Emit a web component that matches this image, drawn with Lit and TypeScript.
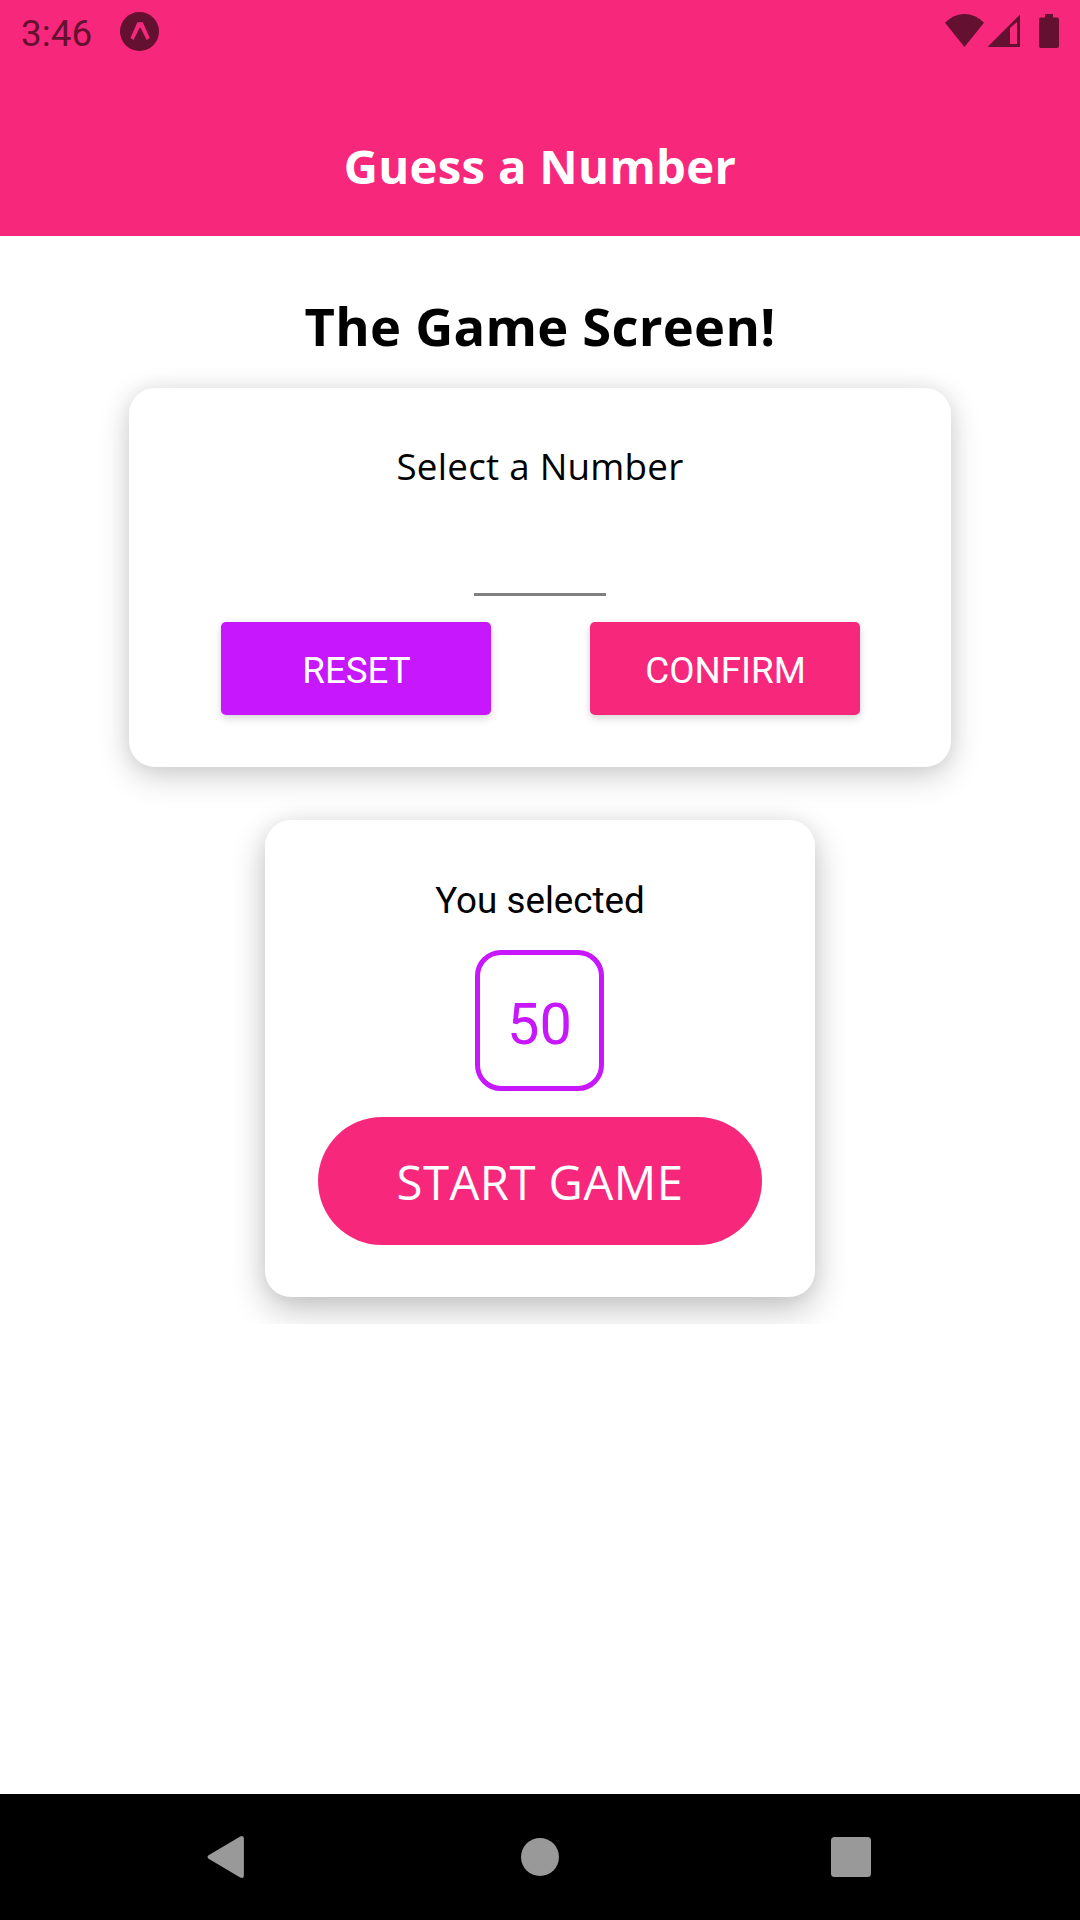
import { LitElement, html, css } from "lit";
import { customElement, property, state } from "lit/decorators.js";

@customElement("status-bar")
class StatusBar extends LitElement {
  static styles = css`
    :host {
      display: flex;
      align-items: flex-start;
      justify-content: space-between;
      height: 63px;
      box-sizing: border-box;
      padding: 0 21px;
      color: #631031;
      font-family: Roboto, sans-serif;
    }
    .side {
      display: flex;
      align-items: flex-start;
    }
    .time {
      font-size: 36.75px;
      line-height: 68px;
      letter-spacing: 0.1px;
      width: 99px;
    }
    .app {
      margin-top: 12px;
    }
    .wifi {
      margin-top: 14px;
    }
    .signal {
      margin: 14px 0 0 3px;
    }
    .battery {
      margin: 14px 0 0 19px;
    }
    svg {
      display: block;
    }
  `;
  @property() time = "";
  render() {
    return html`
      <div class="side">
        <span class="time">${this.time}</span>
        <svg class="app" width="39" height="39" viewBox="0 0 39 39">
          <circle cx="19.5" cy="19.5" r="19.5" fill="currentColor" />
          <path
            d="M17.4 10.2H22.8L29.8 26 26.6 28 20.7 16Q20.1 15 19.5 16L13.6 28 10.4 26Z"
            fill="#f7287b"
          />
        </svg>
      </div>
      <div class="side">
        <svg class="wifi" width="39" height="33" viewBox="0 0 39 33">
          <path d="M0 8.8Q8.7 0 19.5 0T39 8.8L19.5 33Z" fill="currentColor" />
        </svg>
        <svg class="signal" width="33" height="33" viewBox="0 0 33 33">
          <path
            d="M.5 33 33 .5V33ZM23 14V30H30V8Z"
            fill="currentColor"
            fill-rule="evenodd"
          />
        </svg>
        <svg class="battery" width="20" height="34" viewBox="0 0 20 34">
          <path
            d="M6 0H14V3.4H18Q20 3.4 20 5.4V32Q20 34 18 34H2Q0 34 0 32V5.4Q0 3.4 2 3.4H6Z"
            fill="currentColor"
          />
        </svg>
      </div>
    `;
  }
}

@customElement("nav-bar")
class NavBar extends LitElement {
  static styles = css`
    :host {
      display: grid;
      grid-template-columns: 450px 180px 450px;
      align-items: center;
      justify-items: center;
      height: 126px;
      background: #000;
      color: #999;
    }
    svg {
      display: block;
    }
    .back {
      margin-left: 1px;
    }
    .recent {
      margin-left: -8px;
    }
  `;
  render() {
    return html`
      <svg class="back" width="38" height="44" viewBox="0 0 38 44">
        <path
          d="M1.6 20.3 33.2 1.4Q36.9 0 36.9 3.5V40.5Q36.9 44 33.2 42.6L1.6 23.7Q-.6 22 1.6 20.3Z"
          fill="currentColor"
        />
      </svg>
      <svg width="40" height="40" viewBox="0 0 40 40">
        <circle cx="20" cy="20" r="19" fill="currentColor" />
      </svg>
      <svg class="recent" width="40" height="40" viewBox="0 0 40 40">
        <rect width="40" height="40" rx="3.5" fill="currentColor" />
      </svg>
    `;
  }
}

@customElement("app-root")
class AppRoot extends LitElement {
  static styles = css`
    :host {
      display: flex;
      flex-direction: column;
      width: 1080px;
      height: 1920px;
      background: #fff;
      color: #000;
      font-family: "Open Sans", sans-serif;
    }
    header {
      height: 236px;
      background: #f7287b;
      color: #fff;
    }
    .app-title {
      margin: 0;
      padding-top: 32px;
      font-size: 47.25px;
      line-height: 141px;
      font-weight: 700;
      letter-spacing: 0.3px;
      text-align: center;
    }
    main {
      flex: 1;
      display: flex;
      flex-direction: column;
      align-items: center;
      padding-top: 53px;
    }
    .heading {
      margin: 0 0 26px;
      font-size: 52.5px;
      line-height: 73px;
      font-weight: 700;
      letter-spacing: 0.25px;
    }
    .card {
      box-sizing: border-box;
      display: flex;
      flex-direction: column;
      align-items: center;
      background: #fff;
      border-radius: 26px;
      padding: 52px;
      box-shadow: 0 10px 32px rgba(0, 0, 0, 0.18), 0 0 20px rgba(0, 0, 0, 0.07);
    }
    .entry {
      width: 822px;
      height: 379px;
    }
    .label {
      font-size: 36.75px;
      line-height: 52px;
      letter-spacing: 0.25px;
    }
    .number-input {
      box-sizing: border-box;
      width: 132px;
      height: 78px;
      margin: 26px 0;
      padding: 0;
      border: 0;
      border-bottom: 3px solid #808080;
      background: none;
      font: 36.75px Roboto, sans-serif;
      text-align: center;
      outline: none;
    }
    .actions {
      display: flex;
      gap: 99px;
    }
    .action {
      width: 270px;
      height: 93px;
      padding: 3px 0 0 2px;
      border: 0;
      border-radius: 5px;
      color: #fff;
      font: 36.75px Roboto, sans-serif;
      text-align: center;
      box-shadow: 0 4px 9px rgba(0, 0, 0, 0.13), 0 0 6px rgba(0, 0, 0, 0.06);
    }
    .reset {
      background: #c717fc;
    }
    .confirm {
      background: #f7287b;
    }
    .summary {
      width: 100%;
      display: flex;
      justify-content: center;
      padding: 53px 0 27px;
      overflow: hidden;
    }
    .selected {
      width: 550px;
      height: 477px;
      box-shadow: 0 13px 34px rgba(0, 0, 0, 0.23), 0 0 20px rgba(0, 0, 0, 0.06);
    }
    .selected-label {
      padding-top: 4px;
      font: 36.75px/50px Roboto, sans-serif;
    }
    .number {
      box-sizing: border-box;
      width: 129px;
      height: 141px;
      margin: 24px 1px 26px 0;
      padding-top: 8px;
      border: 5px solid #c717fc;
      border-radius: 26px;
      color: #c717fc;
      font: 57.75px/123px Roboto, sans-serif;
      text-align: center;
    }
    .start {
      width: 444px;
      height: 128px;
      flex: none;
      padding: 0;
      border: 0;
      border-radius: 64px;
      background: #f7287b;
      color: #fff;
      font: 47.25px "Open Sans", sans-serif;
      letter-spacing: 0.45px;
    }
  `;
  @state() private selected = 50;
  render() {
    return html`
      <header>
        <status-bar time="3:46"></status-bar>
        <h1 class="app-title">Guess a Number</h1>
      </header>
      <main>
        <h2 class="heading">The Game Screen!</h2>
        <section class="card entry">
          <span class="label">Select a Number</span>
          <input class="number-input" aria-label="Number" />
          <div class="actions">
            <button class="action reset">RESET</button>
            <button class="action confirm">CONFIRM</button>
          </div>
        </section>
        <div class="summary">
          <section class="card selected">
            <span class="selected-label">You selected</span>
            <div class="number">${this.selected}</div>
            <button class="start">START GAME</button>
          </section>
        </div>
      </main>
      <nav-bar></nav-bar>
    `;
  }
}
